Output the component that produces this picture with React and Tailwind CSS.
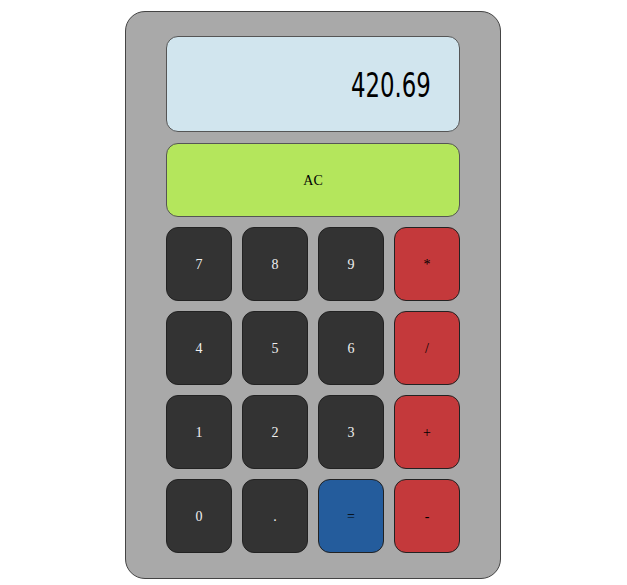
import React from 'react';

const keys = [
  { label: '7', kind: 'num' },
  { label: '8', kind: 'num' },
  { label: '9', kind: 'num' },
  { label: '*', kind: 'op' },
  { label: '4', kind: 'num' },
  { label: '5', kind: 'num' },
  { label: '6', kind: 'num' },
  { label: '/', kind: 'op' },
  { label: '1', kind: 'num' },
  { label: '2', kind: 'num' },
  { label: '3', kind: 'num' },
  { label: '+', kind: 'op' },
  { label: '0', kind: 'num' },
  { label: '.', kind: 'num' },
  { label: '=', kind: 'eq' },
  { label: '-', kind: 'op' },
];

const kindClass = {
  num: 'bg-[#333333] text-[#f0f0f0]',
  op: 'bg-[#c4393b] text-black',
  eq: 'bg-[#245c9c] text-black',
};

export default function App() {
  return (
    <div className="w-[627px] h-[585px] bg-white pt-[11px]">
      <div className="ml-[125px] w-[376px] h-[568px] bg-[#a9a9a9] border border-[#444] rounded-[20px] px-[40px] pt-[24px] font-['Liberation_Serif',serif] text-[14px]">
        {/* display */}
        <div className="h-[96px] bg-[#d1e5ee] border border-[#555] rounded-[12px] flex items-center justify-end pr-[28px] pt-[4px]">
          <span className="inline-block origin-right scale-x-[0.77] font-['DejaVu_Sans_Condensed',sans-serif] text-[33px] text-black">
            420.69
          </span>
        </div>

        <button className="mt-[11px] w-full h-[74px] bg-[#b4e65c] border border-[#555] rounded-[12px] text-black">
          AC
        </button>

        <div className="mt-[10px] grid grid-cols-4 gap-[10px]">
          {keys.map((k) => (
            <button
              key={k.label}
              className={`h-[74px] rounded-[12px] border border-[#222] ${kindClass[k.kind]}`}
            >
              {k.label}
            </button>
          ))}
        </div>
      </div>
    </div>
  );
}
